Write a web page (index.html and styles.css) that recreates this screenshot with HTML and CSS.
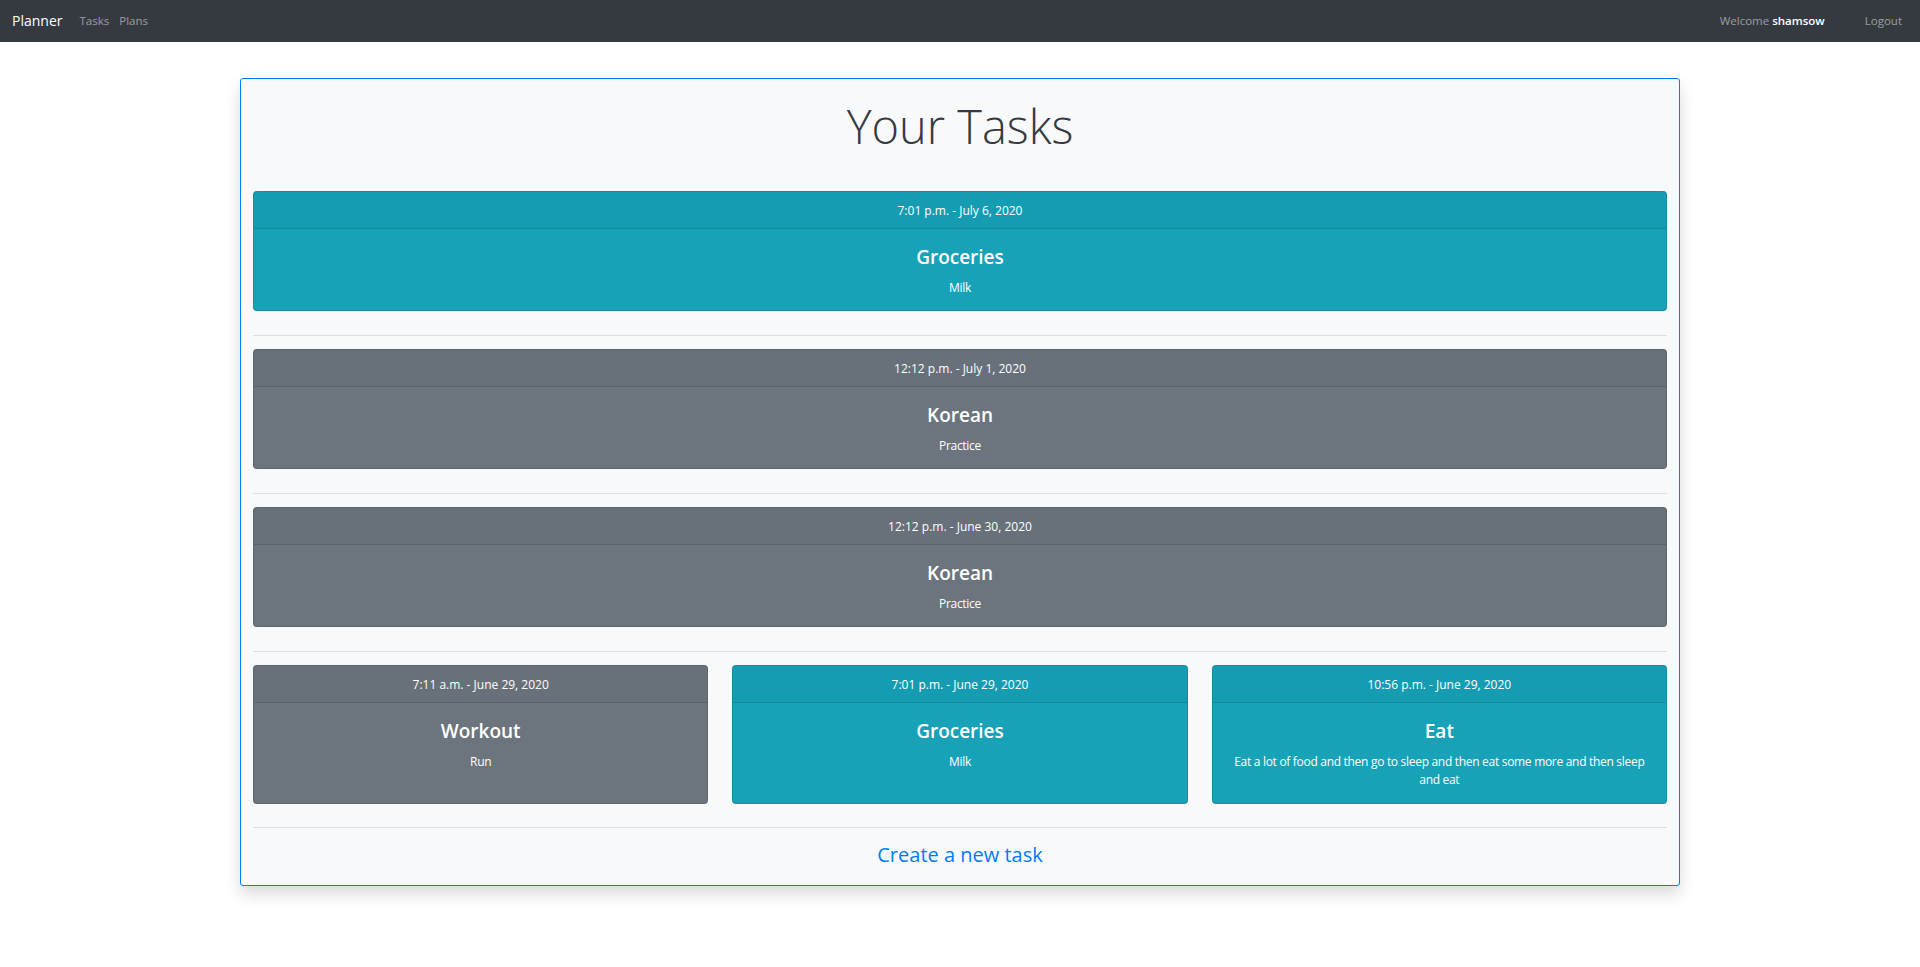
FILE: index.html
```html
<!DOCTYPE html>
<html lang="en">
<head>
<meta charset="utf-8">
<title>Planner</title>
<link rel="stylesheet" href="styles.css">
</head>
<body>
<nav class="navbar">
  <a class="brand" href="#">Planner</a>
  <div class="nav-left">
    <a class="nav-link" href="#">Tasks</a>
    <a class="nav-link" href="#">Plans</a>
  </div>
  <div class="nav-right">
    <span class="welcome">Welcome <span class="user">shamsow</span></span>
    <a class="nav-link logout" href="#">Logout</a>
  </div>
</nav>

<main class="main">
  <section class="panel">
    <h1 class="title">Your Tasks</h1>

    <div class="card info">
      <div class="card-header">7:01 p.m. - July 6, 2020</div>
      <div class="card-body">
        <h5 class="card-title">Groceries</h5>
        <p class="card-text">Milk</p>
      </div>
    </div>
    <hr class="sep">

    <div class="card secondary">
      <div class="card-header">12:12 p.m. - July 1, 2020</div>
      <div class="card-body">
        <h5 class="card-title">Korean</h5>
        <p class="card-text">Practice</p>
      </div>
    </div>
    <hr class="sep">

    <div class="card secondary">
      <div class="card-header">12:12 p.m. - June 30, 2020</div>
      <div class="card-body">
        <h5 class="card-title">Korean</h5>
        <p class="card-text">Practice</p>
      </div>
    </div>
    <hr class="sep">

    <div class="card-row">
      <div class="card secondary">
        <div class="card-header">7:11 a.m. - June 29, 2020</div>
        <div class="card-body">
          <h5 class="card-title">Workout</h5>
          <p class="card-text">Run</p>
        </div>
      </div>
      <div class="card info">
        <div class="card-header">7:01 p.m. - June 29, 2020</div>
        <div class="card-body">
          <h5 class="card-title">Groceries</h5>
          <p class="card-text">Milk</p>
        </div>
      </div>
      <div class="card info">
        <div class="card-header">10:56 p.m. - June 29, 2020</div>
        <div class="card-body">
          <h5 class="card-title">Eat</h5>
          <p class="card-text">Eat a lot of food and then go to sleep and then eat some more and then sleep and eat</p>
        </div>
      </div>
    </div>
    <hr class="sep">

    <div class="create">
      <a class="create-link" href="#">Create a new task</a>
    </div>
  </section>
</main>
</body>
</html>
```

FILE: styles.css
```css
* { box-sizing: border-box; }

html, body {
  margin: 0;
  padding: 0;
  background: #ffffff;
  font-family: "Open Sans", "Noto Sans", "DejaVu Sans", sans-serif;
  color: #212529;
}

a { text-decoration: none; }

.navbar {
  display: flex;
  align-items: center;
  height: 42px;
  padding: 0 18px 0 12px;
  background: #343a40;
}

.brand {
  color: #ffffff;
  font-size: 14px;
  line-height: 42px;
  margin-right: 12px;
}

.nav-left {
  display: flex;
  flex: 1;
}

.nav-link {
  color: rgba(255, 255, 255, 0.5);
  font-size: 11.5px;
  line-height: 42px;
  padding: 0 5px;
}

.nav-right {
  display: flex;
  align-items: center;
}

.welcome {
  color: rgba(255, 255, 255, 0.5);
  font-size: 11.5px;
  line-height: 42px;
  margin-right: 40px;
}

.user {
  color: #ffffff;
  font-weight: 600;
}

.logout { padding: 0; }

.main {
  padding: 36px 0 60px;
}

.panel {
  width: 1440px;
  margin: 0 auto;
  background: #f8f9fa;
  border: 1px solid #007bff;
  border-radius: 3px;
  box-shadow: 0 8px 16px rgba(0, 0, 0, 0.15);
  padding: 13px 12px 0;
}

.title {
  margin: 0 0 31px;
  text-align: center;
  font-size: 47px;
  font-weight: 300;
  line-height: 68px;
  color: #343a40;
}

.card {
  border: 1px solid rgba(0, 0, 0, 0.125);
  border-radius: 4px;
  color: #ffffff;
  text-align: center;
  display: flex;
  flex-direction: column;
}

.card.info { background: #17a2b8; }
.card.secondary { background: #6c757d; }

.card-header {
  height: 37px;
  padding-top: 2px;
  line-height: 34px;
  font-size: 12px;
  background: rgba(0, 0, 0, 0.03);
  border-bottom: 1px solid rgba(0, 0, 0, 0.125);
  border-radius: 3px 3px 0 0;
}

.card-body {
  flex: 1;
  padding: 16px 16px 13px;
}

.card-row .card-body {
  padding-bottom: 14px;
}

.card-title {
  margin: 0 0 10px;
  font-size: 19px;
  font-weight: 600;
  line-height: 24px;
}

.card-text {
  margin: 0;
  font-size: 12px;
  letter-spacing: -0.3px;
  line-height: 18px;
}

.sep {
  margin: 24px 0 13px;
  border: 0;
  border-top: 1px solid rgba(0, 0, 0, 0.1);
  height: 0;
}

.card-row + .sep {
  margin-top: 23px;
}

.create {
  text-align: center;
  padding: 2px 0 18px;
}

.card-row {
  display: grid;
  grid-template-columns: repeat(3, 1fr);
  gap: 24px;
}

.create-link {
  color: #007bff;
  font-size: 20px;
  line-height: 24px;
}
```
